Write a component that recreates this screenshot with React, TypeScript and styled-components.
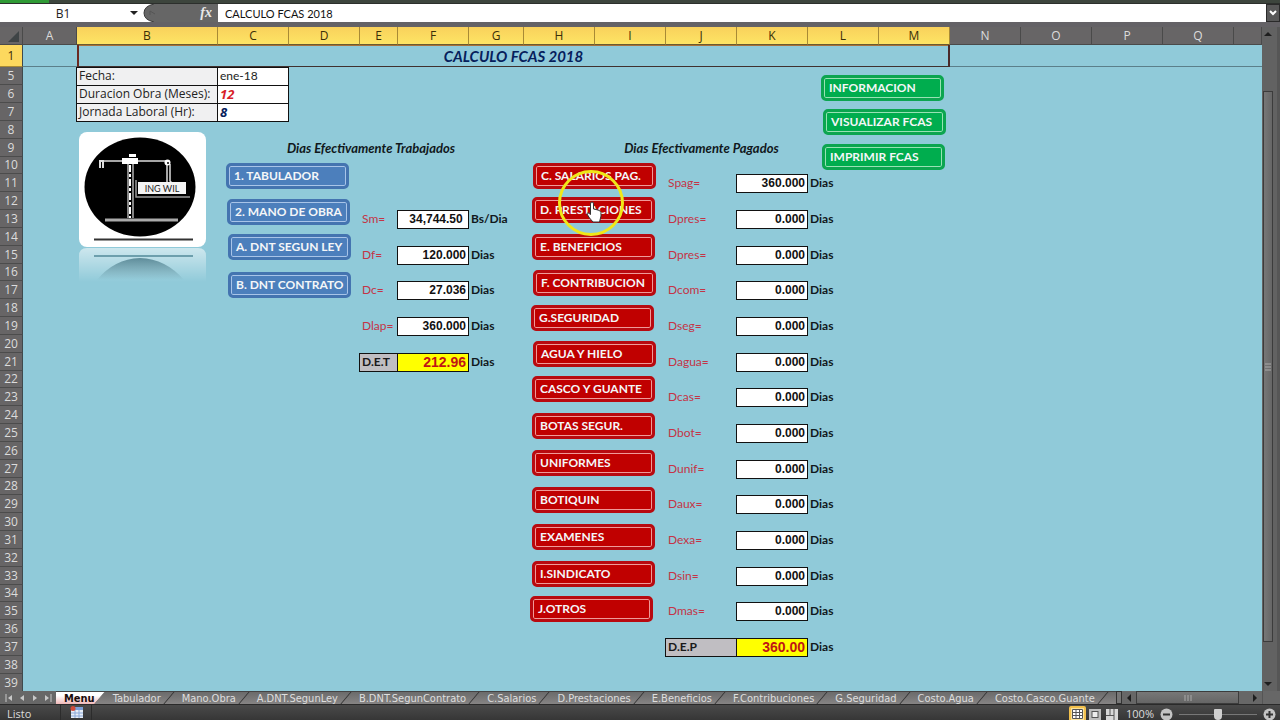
import React from 'react';
import styled, { createGlobalStyle, css } from 'styled-components';

const SHEET = '#90cad9';
const LINE = '#111';
const lato = 'Lato, "Open Sans", sans-serif';
const open = '"Open Sans", "Noto Sans", sans-serif';
const tahoma = '"DejaVu Sans Condensed", "DejaVu Sans", sans-serif';
const arial = '"Liberation Sans", Arial, sans-serif';

const Global = createGlobalStyle`
  * { box-sizing: border-box; }
  body { margin: 0; background: #3c3c3c; font-family: ${lato}; font-size: 12px; }
  button, input { font: inherit; color: inherit; margin: 0; padding: 0; border: 0; background: none; }
`;

const Window = styled.div`
  display: flex;
  flex-direction: column;
  height: 100vh;
  overflow: hidden;
`;

/* Ribbon edge and formula bar */
const RibbonEdge = styled.div`
  flex: none;
  height: 4px;
  border-bottom: 1px solid #2c2f2c;
  background: linear-gradient(90deg, #2f9a35 0 49px, #3d453d 49px 100%);
`;
const FormulaBar = styled.div`
  flex: none;
  display: flex;
  height: 23px;
  border-bottom: 5px solid #646266;
  background: #666;
`;
const NameBox = styled.div`
  display: flex;
  align-items: center;
  width: 142px;
  background: #fff;
`;
const NameInput = styled.input`
  flex: 1;
  min-width: 0;
  text-align: center;
  font-family: ${open};
  color: #222;
`;
const Caret = styled.button`
  display: grid;
  place-items: center;
  width: 16px;
  height: 18px;
`;
const FxArea = styled.div`
  display: flex;
  align-items: center;
  justify-content: space-between;
  width: 76px;
  padding-right: 6px;
`;
const FxButton = styled.button`
  font: italic bold 14px/16px "Liberation Serif", serif;
  color: #e8e8e8;
`;
const FormulaInput = styled.input`
  flex: 1;
  min-width: 0;
  padding-left: 7px;
  background: #fff;
  font-family: ${lato};
  font-size: 11px;
  color: #111;
`;
const Expand = styled.button`
  display: grid;
  place-items: center;
  width: 14px;
  border: 1px solid #2a2a2a;
  background: #585858;
`;

/* Worksheet */
const SheetArea = styled.main`
  flex: 1;
  display: flex;
  min-height: 0;
`;
const Grid = styled.div`
  position: relative;
  flex: 1;
  min-width: 0;
  overflow: hidden;
  background: ${SHEET};
`;
const Table = styled.table`
  table-layout: fixed;
  width: 100%;
  border-spacing: 0;
  line-height: 16px;
  td, th { padding: 0; white-space: nowrap; }
`;
const HeadRow = styled.tr`
  height: 18px;
`;
const ColHead = styled.th<{ $on?: boolean }>`
  font: 12px/16px ${open};
  border-right: 1px solid ${p => (p.$on ? '#a88a35' : '#4a4a4a')};
  border-bottom: 1px solid ${p => (p.$on ? '#6b5a30' : '#4a4a4a')};
  color: ${p => (p.$on ? '#3a2e08' : '#dcdcdc')};
  background: ${p => (p.$on ? 'linear-gradient(#f9d15c, #fde464)' : '#676566')};
  svg { display: block; margin-left: 2px; }
`;
const RowHead = styled.th<{ $on?: boolean }>`
  font: 12px/16px ${open};
  border-right: 1px solid #3f4a4d;
  border-bottom: 1px solid ${p => (p.$on ? '#a88a35' : '#4c4c4c')};
  color: ${p => (p.$on ? '#3a2e08' : '#dcdcdc')};
  background: ${p => (p.$on ? '#fcd85e' : '#676566')};
`;
const TitleRow = styled.tr`
  height: 22px;
  td { border-bottom: 1px solid #5b7f8a; }
`;
const TitleCell = styled.td`
  && { border-bottom: 1px solid #40312f; }
  border-left: 2px solid #6b2a22;
  border-right: 2px solid #4a2a2a;
  box-shadow: inset 0 1px #a8703a;
  text-align: center;
  font: italic bold 15px/18px ${lato};
  color: #06205c;
`;
const Row = styled.tr`
  height: 18px;
  &:nth-child(6n + 1) { height: 17px; }
`;

type Kind = 'blank' | 'field' | 'date' | 'hot' | 'cold' | 'head' | 'label' | 'value' | 'unit' | 'totalLabel' | 'total';
const boxed = css`
  box-shadow: inset 0 1px ${LINE}, inset -1px 0 ${LINE}, 0 1px ${LINE}, -1px 0 ${LINE}, -1px 1px ${LINE};
`;
const kinds: Record<Kind, ReturnType<typeof css> | string> = {
  blank: '',
  field: css`${boxed} background: #f0f0f1; font: 12px/16px ${open}; color: #222; text-indent: 2px;`,
  date: css`${boxed} background: #fff; font: 12px/16px ${lato}; color: #222; text-indent: 2px;`,
  hot: css`${boxed} background: #fff; font: italic bold 13px/16px ${open}; color: #d81e28; text-indent: 2px;`,
  cold: css`${boxed} background: #fff; font: italic bold 13px/16px ${open}; color: #06205c; text-indent: 2px;`,
  head: css`text-align: center; font: italic bold 13px/16px ${lato}; color: #10181c;`,
  label: css`color: #c43446; text-indent: 2px;`,
  value: css`${boxed} && { padding-right: 3px; } background: #fff; text-align: right; font: bold 12px/16px ${arial}; color: #111;`,
  unit: css`font-weight: bold; color: #10181c; text-indent: 2px;`,
  totalLabel: css`${boxed} background: #c0bec2; font-weight: bold; color: #1a1a1a; text-indent: 2px;`,
  total: css`${boxed} && { padding-right: 3px; } background: #ff0; text-align: right; font: bold 14px/16px ${arial}; color: #c01414;`,
};
const Cell = styled.td<{ $kind: Kind }>`
  ${p => kinds[p.$kind]}
`;

/* Shapes that float above the cells, where the sheet's author dropped them */
const tones = {
  blue: { rim: '#4474b0', fill: '#4c7fbc', line: '#a8c4e8' },
  red: { rim: '#b80a10', fill: '#c00000', line: '#f09a98' },
  green: { rim: '#0ca550', fill: '#00ad4e', line: '#98e2b4' },
};
type Tone = keyof typeof tones;
const Shape = styled.button<{ $x: number; $y: number; $tone: Tone }>`
  position: absolute;
  left: ${p => p.$x}px;
  top: ${p => p.$y}px;
  width: 123px;
  height: 26px;
  padding: 0 0 1px 5px;
  border: 3px solid ${p => tones[p.$tone].rim};
  border-radius: 5px;
  background: ${p => tones[p.$tone].fill};
  box-shadow: inset 0 0 0 1px ${p => tones[p.$tone].line};
  color: #f4f6f8;
  text-align: left;
  white-space: nowrap;
  font: bold 12px/16px ${lato};
`;
const Logo = styled.svg`
  position: absolute;
  left: 79px;
  top: 105px;
`;
const Pointer = styled.svg`
  position: absolute;
  left: 557px;
  top: 142px;
  pointer-events: none;
`;

/* Scroll bars */
const VScroll = styled.div`
  flex: none;
  display: flex;
  flex-direction: column;
  align-items: center;
  width: 18px;
  padding: 0 4px 0 1px;
  background: #626262;
  border-right: 3px solid #565656;
`;
const ScrollArrow = styled.button`
  flex: none;
  display: grid;
  place-items: center;
  width: 14px;
  height: 14px;
`;
const VTrack = styled.div`
  flex: 1;
  display: flex;
  flex-direction: column;
  align-self: stretch;
  padding: 50px 0 35px;
`;
const VThumb = styled.div`
  flex: 1;
  display: grid;
  place-items: center;
  border: 1px solid #3c3c3c;
  background: linear-gradient(90deg, #777, #666);
`;

/* Sheet tabs */
const TabBar = styled.div`
  flex: none;
  display: flex;
  height: 14px;
  border-bottom: 1px solid #2a2a2a;
  background: #676767;
`;
const TabNav = styled.div`
  display: flex;
  align-items: center;
  justify-content: space-around;
  width: 56px;
  padding: 0 2px;
`;
const NavButton = styled.button`
  display: grid;
  place-items: center;
  width: 12px;
  height: 12px;
`;
const Tabs = styled.nav`
  flex: 1;
  display: flex;
  min-width: 0;
  overflow: hidden;
  border-top: 1px solid #444;
  background: linear-gradient(#6b6b6b, #868484);
`;
const Tab = styled.button<{ $on?: boolean }>`
  position: relative;
  flex: none;
  padding: 1px ${p => (p.$on ? 10 : 13)}px 0 8px;
  font: ${p => (p.$on ? 'bold' : 'normal')} 11px/12px ${tahoma};
  color: ${p => (p.$on ? '#1a0d0d' : '#dedede')};
  ${p => p.$on && css`
    background: linear-gradient(#fff 30%, #f0b8b8);
    clip-path: polygon(0 0, 100% 0, calc(100% - 10px) 100%, 0 100%);
  `}
  &::after {
    content: '';
    position: absolute;
    right: 5px;
    top: 0;
    width: 1px;
    height: 13px;
    background: #303030;
    transform: skewX(-40deg);
  }
`;
const Splitter = styled.div`
  width: 6px;
  border: 1px solid #333;
  background: #777;
`;
const HScroll = styled.div`
  display: flex;
  align-items: center;
  width: 140px;
`;
const HThumb = styled.div`
  flex: 1;
  display: grid;
  place-items: center;
  height: 13px;
  margin-right: 9px;
  border: 1px solid #3c3c3c;
  background: linear-gradient(#777, #666);
`;
const Corner = styled.div`
  width: 18px;
  border-left: 1px solid #555;
`;

/* Status bar */
const StatusBar = styled.footer`
  flex: none;
  display: flex;
  height: 15px;
  overflow: hidden;
  background: linear-gradient(#4a4a4a, #363636);
  font: 11px/18px ${open};
  color: #dcdcdc;
`;
const Ready = styled.span`
  width: 60px;
  padding-left: 7px;
`;
const MacroSlot = styled.button`
  width: 32px;
  height: 18px;
  border: solid #2c2c2c;
  border-width: 0 1px;
`;
const StatusRight = styled.div`
  display: flex;
  align-items: center;
  height: 18px;
  margin-left: auto;
  padding-right: 4px;
`;
const ViewButton = styled.button<{ $on?: boolean }>`
  display: grid;
  place-items: center;
  width: 17px;
  height: 16px;
  border: 2px solid ${p => (p.$on ? '#f2c04c' : 'transparent')};
  border-radius: 2px;
  background: ${p => (p.$on ? '#fae29a' : 'none')};
`;
const ZoomText = styled.button`
  width: 40px;
  text-align: center;
`;
const ZoomStep = styled.button`
  display: grid;
  place-items: center;
  width: 13px;
  height: 18px;
`;
const ZoomRange = styled.input`
  appearance: none;
  width: 90px;
  height: 18px;
  background: linear-gradient(#777, #777) center / 78px 1px no-repeat;
  &::-webkit-slider-thumb {
    appearance: none;
    width: 8px;
    height: 11px;
    border-radius: 1px 1px 4px 4px;
    background: #d0d0d0;
  }
`;

const columns: [string, number | undefined][] = [
  ['A', 54], ['B', 141], ['C', 71], ['D', 71], ['E', 38], ['F', 71], ['G', 55], ['H', 71], ['I', 71],
  ['J', 71], ['K', 71], ['L', 71], ['M', 71], ['N', 71], ['O', 71], ['P', 71], ['Q', 71], ['', undefined],
];

type Entry = [text: string, kind: Kind, span?: number];
const cells: Record<string, Entry> = {
  B5: ['Fecha:', 'field'], C5: ['ene-18', 'date'],
  B6: ['Duracion Obra (Meses):', 'field'], C6: ['12', 'hot'],
  B7: ['Jornada Laboral (Hr):', 'field'], C7: ['8', 'cold'],
  C9: ['Dias Efectivamente Trabajados', 'head', 5],
  I9: ['Dias Efectivamente Pagados', 'head', 3],
  E21: ['D.E.T', 'totalLabel'], F21: ['212.96', 'total'], G21: ['Dias', 'unit'],
  J37: ['D.E.P', 'totalLabel'], K37: ['360.00', 'total'], L37: ['Dias', 'unit'],
};
const worked: [string, string, string][] = [
  ['Sm=', '34,744.50 ', 'Bs/Dia'], ['Df=', '120.000', 'Dias'], ['Dc=', '27.036', 'Dias'], ['Dlap=', '360.000', 'Dias'],
];
worked.forEach(([name, value, unit], i) => {
  const r = 13 + i * 2;
  cells[`E${r}`] = [name, 'label'];
  cells[`F${r}`] = [value.replace(' ', '\u00a0'), 'value'];
  cells[`G${r}`] = [unit, 'unit'];
});
['Spag=', 'Dpres=', 'Dpres=', 'Dcom=', 'Dseg=', 'Dagua=', 'Dcas=', 'Dbot=', 'Dunif=', 'Daux=', 'Dexa=', 'Dsin=', 'Dmas='].forEach((name, i) => {
  const r = 11 + i * 2;
  cells[`J${r}`] = [name, 'label'];
  cells[`K${r}`] = [i === 0 ? '360.000' : '0.000', 'value'];
  cells[`L${r}`] = ['Dias', 'unit'];
});

const shapes: [string, number, number, Tone][] = [
  ['INFORMACION', 821, 48, 'green'], ['VISUALIZAR FCAS', 823, 82, 'green'], ['IMPRIMIR FCAS', 822, 117, 'green'],
  ['1. TABULADOR', 226, 136, 'blue'], ['2. MANO DE OBRA', 227, 172, 'blue'],
  ['A. DNT SEGUN LEY', 228, 207, 'blue'], ['B. DNT CONTRATO', 228, 245, 'blue'],
  ['C. SALARIOS PAG.', 533, 136, 'red'], ['D. PRESTACIONES', 532, 170, 'red'], ['E. BENEFICIOS', 532, 207, 'red'],
  ['F. CONTRIBUCION', 533, 243, 'red'], ['G.SEGURIDAD', 531, 278, 'red'], ['AGUA Y HIELO', 533, 314, 'red'],
  ['CASCO Y GUANTE', 532, 349, 'red'], ['BOTAS SEGUR.', 532, 386, 'red'], ['UNIFORMES', 532, 423, 'red'],
  ['BOTIQUIN', 532, 460, 'red'], ['EXAMENES', 532, 497, 'red'], ['I.SINDICATO', 532, 534, 'red'], ['J.OTROS', 530, 569, 'red'],
];

const tabs = ['Menu', 'Tabulador', 'Mano.Obra', 'A.DNT.SegunLey', 'B.DNT.SegunContrato', 'C.Salarios', 'D.Prestaciones',
  'E.Beneficios', 'F.Contribuciones', 'G.Seguridad', 'Costo.Agua', 'Costo.Casco.Guante'];

const rowNumbers = Array.from({ length: 35 }, (_, i) => i + 5);

function SheetRow({ n }: { n: number }) {
  const out: React.ReactNode[] = [];
  for (let c = 0; c < columns.length; c++) {
    const key = `${columns[c][0]}${n}`;
    const entry = cells[key];
    if (entry) {
      const [text, kind, span = 1] = entry;
      out.push(<Cell key={key} $kind={kind} colSpan={span}>{text}</Cell>);
      c += span - 1;
    } else {
      out.push(<Cell key={c} $kind="blank" />);
    }
  }
  return <Row><RowHead scope="row">{n}</RowHead>{out}</Row>;
}

function Triangle({ dir, fill = '#1e1e1e' }: { dir: 'up' | 'down' | 'left' | 'right'; fill?: string }) {
  const d = { up: 'M0 6L4 2L8 6Z', down: 'M0 2L4 6L8 2Z', left: 'M6 0L2 4L6 8Z', right: 'M2 0L6 4L2 8Z' }[dir];
  return <svg width="8" height="8" aria-hidden="true"><path d={d} fill={fill} /></svg>;
}

function CraneLogo() {
  return (
    <Logo width="128" height="150" viewBox="0 0 128 150" role="img" aria-label="ING WIL">
      <defs>
        <linearGradient id="fade" x1="0" y1="0" x2="0" y2="1">
          <stop offset="0" stopColor="#fff" stopOpacity="0.55" />
          <stop offset="1" stopColor="#fff" stopOpacity="0" />
        </linearGradient>
        <linearGradient id="fadeDark" x1="0" y1="0" x2="0" y2="1">
          <stop offset="0" stopColor="#3f7180" stopOpacity="0.75" />
          <stop offset="1" stopColor="#3f7180" stopOpacity="0" />
        </linearGradient>
      </defs>
      <rect x="0" y="0" width="127" height="115" rx="8" fill="#fff" />
      <ellipse cx="61" cy="55" rx="55.5" ry="49.5" fill="#000" />
      <g fill="none" stroke="#ddd">
        <path d="M20 29H90M88 32V51M91 32V49L94 52" strokeWidth="1.5" />
        <path d="M49 32V86M54 32V86" strokeWidth="1.2" />
        <path d="M51 33V86" stroke="#fff" strokeWidth="2" strokeDasharray="7 2 3 2" />
        <path d="M26 88H99" stroke="#aaa" strokeWidth="3" />
        <path d="M57 48V65H111" stroke="#999" strokeWidth="1.5" />
      </g>
      <rect x="43" y="26" width="16" height="6" fill="#fff" />
      <rect x="50" y="22" width="7" height="3" fill="#fff" />
      <rect x="20" y="28" width="5" height="8" fill="#ddd" />
      <path d="M22.500 30V36" stroke="#000" />
      <circle cx="88.500" cy="30.500" r="3" fill="#fff" />
      <circle cx="89" cy="31" r="1" fill="#000" />
      <rect x="59" y="50" width="48" height="12" fill="#f4f4f4" />
      <text x="83" y="60" textAnchor="middle" fontFamily="Lato" fontSize="9" fill="#222">ING WIL</text>
      <path d="M15 107.500H114" stroke="#333" strokeWidth="2" />
      <path d="M0 124Q0 116 8 116H119Q127 116 127 124V150H0Z" fill="url(#fade)" />
      <path d="M15 124H114" stroke="#6d9fad" strokeWidth="2" />
      <path d="M18 148Q35 127 61 126Q87 127 105 148Z" fill="url(#fadeDark)" />
    </Logo>
  );
}

export default function App() {
  return (
    <Window>
      <Global />
      <RibbonEdge />
      <FormulaBar>
        <NameBox>
          <NameInput aria-label="Cuadro de nombres" defaultValue="B1" />
          <Caret aria-label="Abrir nombres"><Triangle dir="down" fill="#222" /></Caret>
        </NameBox>
        <FxArea>
          <svg width="18" height="18" aria-hidden="true">
            <path d="M0 0H12Q2 2 2 9T12 18H0Z" fill="#fff" />
            <path d="M12 0Q2 2 2 9T12 18" fill="none" stroke="#3a3a3a" />
            <path d="M8 7L13 10M8 7V11" stroke="#555" />
          </svg>
          <FxButton aria-label="Insertar función">fx</FxButton>
        </FxArea>
        <FormulaInput aria-label="Barra de fórmulas" defaultValue="CALCULO FCAS 2018" />
        <Expand aria-label="Expandir">
          <svg width="8" height="6" aria-hidden="true"><path d="M1 1L4 4L7 1" fill="none" stroke="#fff" strokeWidth="2" /></svg>
        </Expand>
      </FormulaBar>

      <SheetArea>
        <Grid>
          <Table>
            <colgroup>
              <col width={23} />
              {columns.map(([name, w]) => <col key={name} width={w} />)}
            </colgroup>
            <thead>
              <HeadRow>
                <ColHead aria-label="Seleccionar todo">
                  <svg width="18" height="14" aria-hidden="true"><path d="M17 2V13H6Z" fill="#3f4446" /></svg>
                </ColHead>
                {columns.map(([name], i) => <ColHead key={name} scope="col" $on={i > 0 && i < 13}>{name}</ColHead>)}
              </HeadRow>
            </thead>
            <tbody>
              <TitleRow>
                <RowHead scope="row" $on>1</RowHead>
                <td />
                <TitleCell colSpan={12}>CALCULO FCAS 2018</TitleCell>
                <td /><td /><td /><td /><td />
              </TitleRow>
              {rowNumbers.map(n => <SheetRow key={n} n={n} />)}
            </tbody>
          </Table>
          <CraneLogo />
          {shapes.map(([text, x, y, tone]) => <Shape key={text} $x={x} $y={y} $tone={tone}>{text}</Shape>)}
          <Pointer width="68" height="68" viewBox="0 0 68 68" aria-hidden="true">
            <circle cx="34" cy="34" r="31.500" fill="none" stroke="#f0e818" strokeWidth="3" />
            <path d="M33.500 35Q33.500 33 35 33T36.500 35V40L39 40.500L42.500 41.500Q44.500 42.500 44 47L42.500 53H36L32.500 49L30 45Q30 42.500 33.500 45.500Z" fill="#fff" stroke="#333" strokeWidth="1" />
          </Pointer>
        </Grid>
        <VScroll>
          <ScrollArrow aria-label="Arriba"><Triangle dir="up" /></ScrollArrow>
          <VTrack>
            <VThumb>
              <svg width="6" height="8" aria-hidden="true"><path d="M0 1H6M0 4H6M0 7H6" stroke="#aaa" /></svg>
            </VThumb>
          </VTrack>
          <ScrollArrow aria-label="Abajo"><Triangle dir="down" /></ScrollArrow>
        </VScroll>
      </SheetArea>

      <TabBar>
        <TabNav>
          <NavButton aria-label="Primera hoja"><svg width="8" height="8"><path d="M1 0V8" stroke="#c8c8c8" /><path d="M7 1L3 4L7 7Z" fill="#c8c8c8" /></svg></NavButton>
          <NavButton aria-label="Hoja anterior"><svg width="8" height="8"><path d="M6 1L2 4L6 7Z" fill="#c8c8c8" /></svg></NavButton>
          <NavButton aria-label="Hoja siguiente"><svg width="8" height="8"><path d="M2 1L6 4L2 7Z" fill="#c8c8c8" /></svg></NavButton>
          <NavButton aria-label="Última hoja"><svg width="8" height="8"><path d="M7 0V8" stroke="#c8c8c8" /><path d="M1 1L5 4L1 7Z" fill="#c8c8c8" /></svg></NavButton>
        </TabNav>
        <Tabs>
          {tabs.map((name, i) => <Tab key={name} $on={i === 0}>{name}</Tab>)}
        </Tabs>
        <Splitter />
        <HScroll>
          <ScrollArrow aria-label="Izquierda"><Triangle dir="left" /></ScrollArrow>
          <HThumb>
            <svg width="8" height="6" aria-hidden="true"><path d="M1 0V6M4 0V6M7 0V6" stroke="#aaa" /></svg>
          </HThumb>
          <ScrollArrow aria-label="Derecha"><Triangle dir="right" /></ScrollArrow>
        </HScroll>
        <Corner />
      </TabBar>

      <StatusBar>
        <Ready>Listo</Ready>
        <MacroSlot aria-label="Grabar macro">
          <svg width="13" height="13" viewBox="0 0 13 13">
            <rect x="1" y="2" width="12" height="11" fill="#e8eef8" />
            <rect x="1" y="2" width="12" height="3" fill="#7a9fd8" />
            <path d="M1 8H13M1 11H13M5 5V13M9 5V13" stroke="#8aa8d8" />
            <circle cx="3" cy="3.500" r="2.500" fill="#d04a3a" />
          </svg>
        </MacroSlot>
        <StatusRight>
          <ViewButton $on aria-label="Normal">
            <svg width="11" height="10"><rect width="11" height="10" fill="#fff" /><path d="M.5 .5H10.500V9.500H.5ZM0 3.500H11M0 6.500H11M4 0V10M7.500 0V10" fill="none" stroke="#555" /></svg>
          </ViewButton>
          <ViewButton aria-label="Diseño de página">
            <svg width="12" height="11"><rect width="12" height="11" fill="#bdbdbd" /><rect x="3" y="2.500" width="6" height="6" fill="#eee" stroke="#555" /></svg>
          </ViewButton>
          <ViewButton aria-label="Vista previa de salto de página">
            <svg width="12" height="11"><rect width="12" height="11" fill="#d8d8d8" /><path d="M4 0V6M8 0V6M0 6.500H8M8 6V11" stroke="#555" /></svg>
          </ViewButton>
          <ZoomText>100%</ZoomText>
          <ZoomStep aria-label="Alejar">
            <svg width="13" height="13"><circle cx="6.500" cy="6.500" r="6" fill="#c4c4c4" /><path d="M3 6.500H10" stroke="#333" strokeWidth="2" /></svg>
          </ZoomStep>
          <ZoomRange type="range" aria-label="Zoom" min={0} max={100} defaultValue={50} />
          <ZoomStep aria-label="Acercar">
            <svg width="13" height="13"><circle cx="6.500" cy="6.500" r="6" fill="#c4c4c4" /><path d="M3 6.500H10M6.500 3V10" stroke="#333" strokeWidth="2" /></svg>
          </ZoomStep>
        </StatusRight>
      </StatusBar>
    </Window>
  );
}
